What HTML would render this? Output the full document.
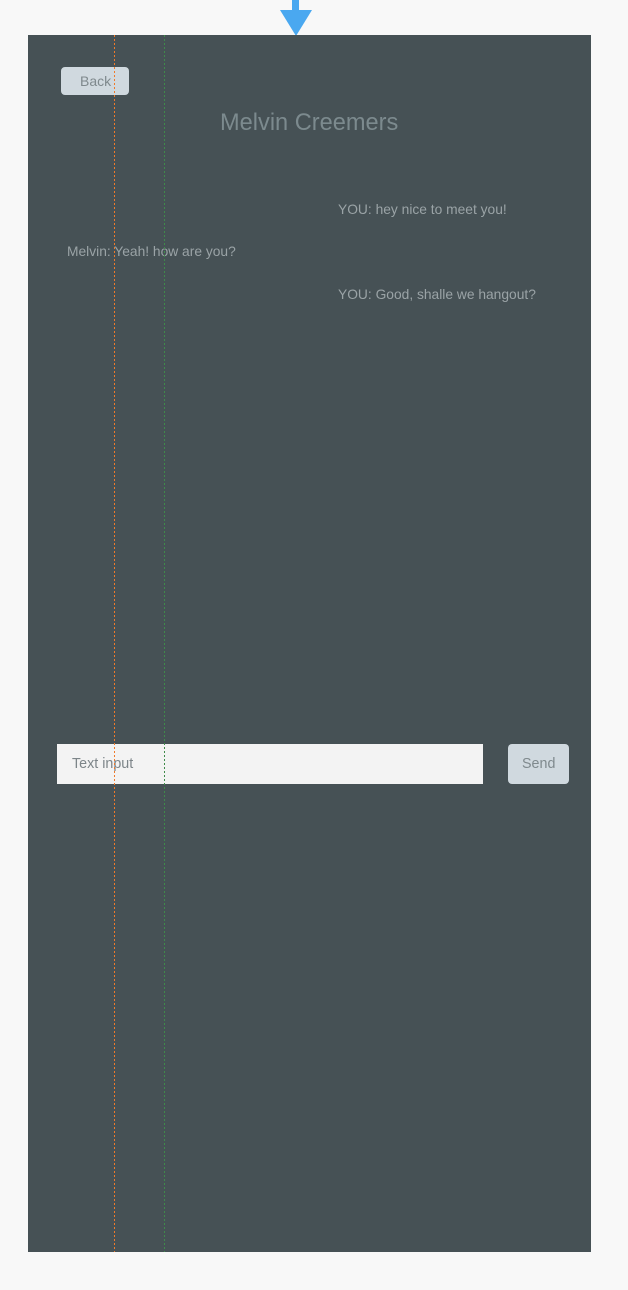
<!DOCTYPE html>
<html><head><meta charset="utf-8"><style>
html,body{margin:0;padding:0;width:628px;height:1290px;background:#f8f8f8;overflow:hidden;font-family:"Liberation Sans",sans-serif;}
.panel{position:absolute;left:28px;top:35px;width:563px;height:1217px;background:#465155;}
.t{position:absolute;color:#9aa3a6;font-size:13.8px;white-space:nowrap;}
.v{position:absolute;top:35px;width:1px;height:1217px;}
</style></head><body>
<div style="position:absolute;left:292px;top:0;width:7px;height:12px;background:#4aa8f0"></div>
<div style="position:absolute;left:280px;top:10px;width:0;height:0;border-left:16px solid transparent;border-right:16px solid transparent;border-top:26px solid #4aa8f0"></div>
<div class="panel"></div>
<div style="position:absolute;left:61px;top:67px;width:68px;height:28px;background:#d0d9df;border-radius:4px;"></div>
<div class="t" style="left:80px;top:73px;font-size:14px;color:#7f898d">Back</div>
<div class="t" style="left:220px;top:110px;font-size:23.6px;color:#7c8a8e">Melvin Creemers</div>
<div class="t" style="left:338px;top:202px">YOU: hey nice to meet you!</div>
<div class="t" style="left:67px;top:244px">Melvin: Yeah! how are you?</div>
<div class="t" style="left:338px;top:287px">YOU: Good, shalle we hangout?</div>
<div style="position:absolute;left:57px;top:744px;width:426px;height:40px;background:#f3f3f3;"></div>
<div class="t" style="left:72px;top:756px;font-size:14.3px;color:#7d8589">Text input</div>
<div style="position:absolute;left:508px;top:744px;width:61px;height:40px;background:#d0d9df;border-radius:4px;"></div>
<div class="t" style="left:522px;top:756px;font-size:14.3px;color:#7f898d">Send</div>
<div class="v" style="left:114px;background:repeating-linear-gradient(to bottom,#f07a2a 0 2px,transparent 2px 4px)"></div>
<div class="v" style="left:164px;background:repeating-linear-gradient(to bottom,#3f8a4a 0 2px,transparent 2px 4px)"></div>
</body></html>
